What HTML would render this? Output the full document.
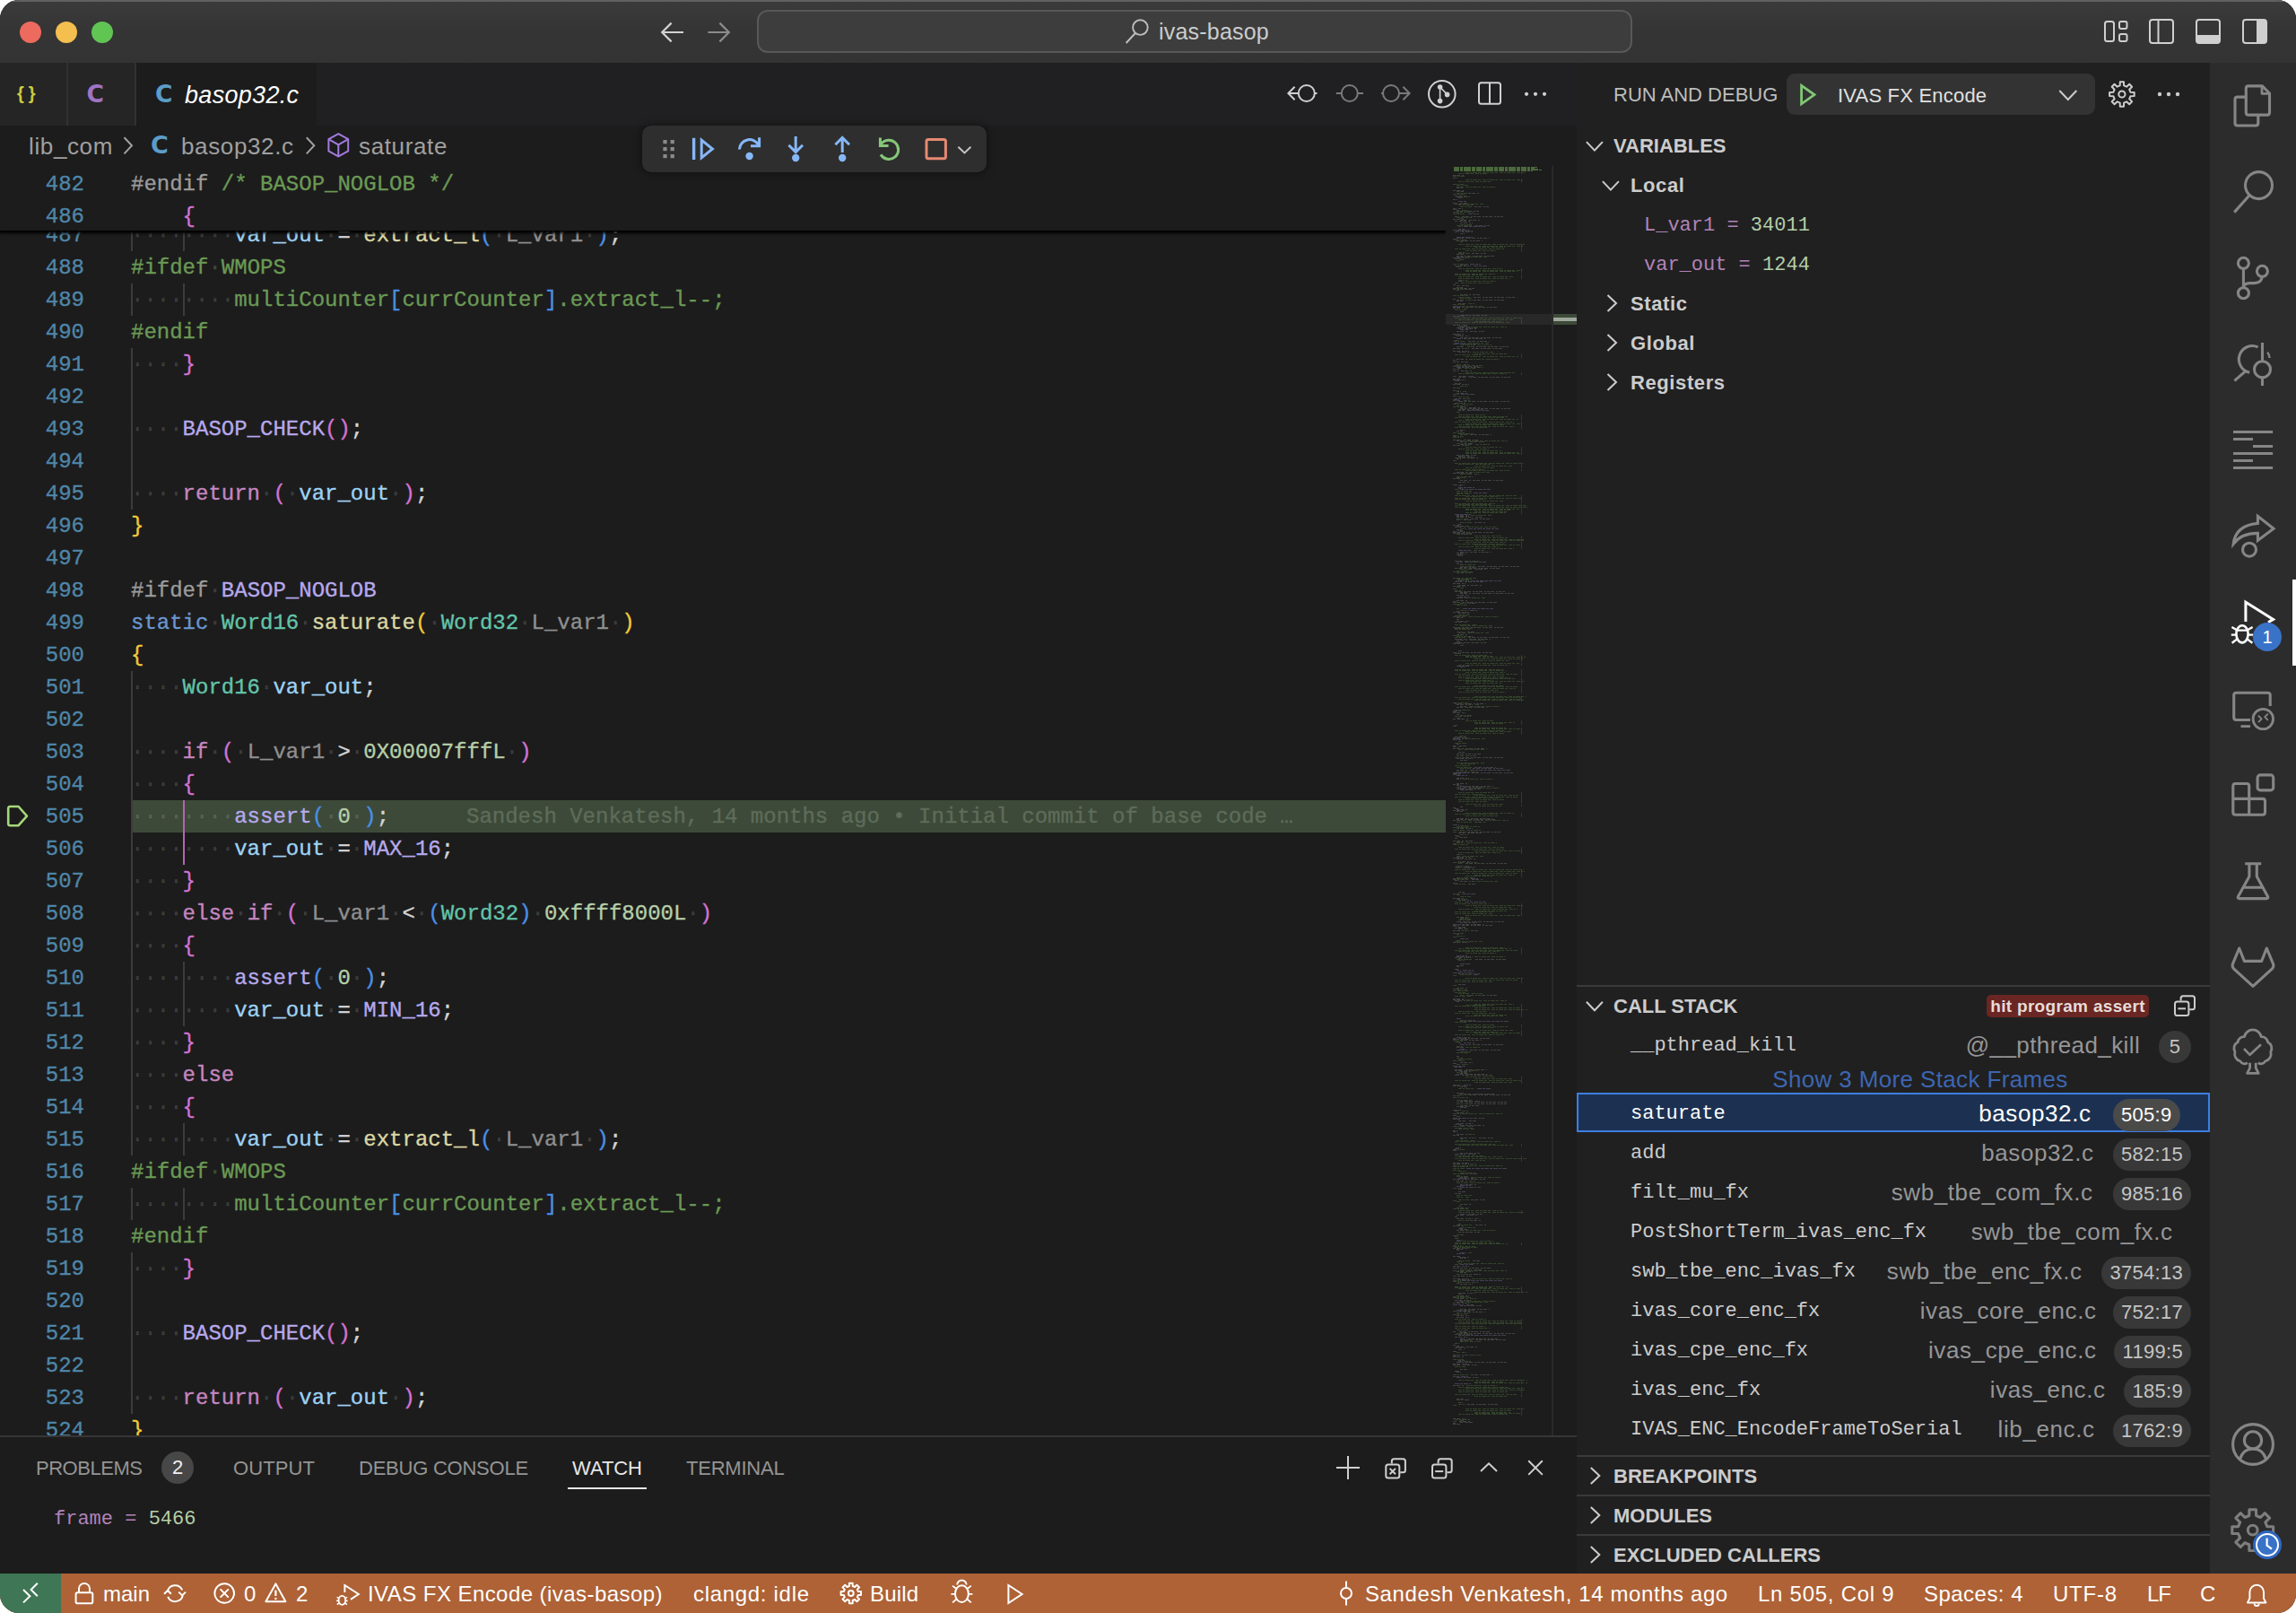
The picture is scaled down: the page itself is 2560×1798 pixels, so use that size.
<!DOCTYPE html>
<html lang="en"><head><meta charset="utf-8"><title>basop32.c — ivas-basop</title>
<style>
*{box-sizing:border-box;margin:0;padding:0}
html,body{width:2560px;height:1798px;overflow:hidden;background:#fff}
body{font-family:"Liberation Sans","DejaVu Sans",sans-serif;color:#ccc;position:relative}
svg{display:block;overflow:visible}
.abs{position:absolute}
#win{position:absolute;left:0;top:0;width:2560px;height:1798px;border-radius:21px;overflow:hidden;background:#1c1c1c}
/* title bar */
#title{position:absolute;left:0;top:0;width:2560px;height:70px;background:linear-gradient(#3b3b3b,#353535 45%,#333)}
#title:before{content:"";position:absolute;left:0;top:0;width:2560px;height:2px;background:#606060}
.tl{position:absolute;top:24px;width:24px;height:24px;border-radius:50%}
#search{position:absolute;left:844px;top:11px;width:976px;height:48px;border:2px solid #585858;border-radius:12px;background:#3d3d3d}
#search span{position:absolute;left:446px;top:6px;font-size:25px;line-height:32px;color:#ccc;letter-spacing:.2px}
/* tabs */
#tabs{position:absolute;left:0;top:70px;width:1758px;height:70px;background:#202022}
.tab{position:absolute;top:0;height:70px;background:#252525;border-right:2px solid #323232}
#tab3{background:#1c1c1c;border-right:none}
#tab3 span{position:absolute;left:54px;top:19px;font-size:27px;line-height:34px;font-style:italic;color:#fff;letter-spacing:.3px}
.cicon{position:absolute;font-weight:bold;font-size:30px;line-height:34px;font-family:"DejaVu Sans","Liberation Sans",sans-serif}
/* breadcrumbs */
#crumbs{position:absolute;left:0;top:140px;width:1758px;height:45px;background:#1c1c1c;font-size:26px;line-height:47px;color:#a0a0a0;letter-spacing:.63px}
#crumbs span{position:absolute;top:0;white-space:nowrap}
/* editor */
#editor{position:absolute;left:0;top:185px;width:1758px;height:1415px;background:#1c1c1c;overflow:hidden}
.ln{position:absolute;left:0;width:1612px;height:36px;font-family:"Liberation Mono","DejaVu Sans Mono",monospace;font-size:24px;line-height:36px;white-space:pre;-webkit-text-stroke:.35px currentColor}
.ln .no{position:absolute;left:0;top:1px;width:94px;text-align:right;color:#4f86a9}
.ln .cd{position:absolute;left:146px;top:1px}
.ln .g{position:absolute;top:0;width:2px;height:36px;background:#3c3c3c}
.ln .ga{background:#b565b0}
.curbg{position:absolute;left:146px;top:0;width:1466px;height:36px;background:#3d4a39}
.blame{position:absolute;left:520px;top:1px;color:#5e6c59}
.k{color:#c586c0}.s{color:#6a96d0}.t{color:#62c4aa}.f{color:#dad7a4}.v{color:#9dd2f4}
.p{color:#8f8f8f}.n{color:#b5cea8}.m{color:#b6a8ec}.c{color:#6a9955}.o{color:#d4d4d4}.d{color:#9b9b9b}
.b1{color:#f0ca3a}.b2{color:#d272d2}.b3{color:#4a8fe6}
.w{color:rgba(255,255,255,.135)}.wc{color:#3a4d33}
#sticky{position:absolute;left:0;top:0;width:1612px;height:72px;background:#1c1c1c;box-shadow:0 2px 3px 1px #000}
#sticky .ln{margin-top:2px}
#mmwrap{position:absolute;left:1612px;top:0;width:146px;height:1415px;background:#1c1c1c}
#mm{position:absolute;left:0;top:0}
#mmslider{position:absolute;left:0;top:165px;width:146px;height:12px;background:rgba(121,121,121,.13)}
#ovr{position:absolute;left:118px;top:0;width:1.5px;height:1415px;background:#2a2a2a}
/* panel */
#panel{position:absolute;left:0;top:1600px;width:1758px;height:154px;background:#1c1c1c;border-top:2px solid #363636}
.ptab{position:absolute;top:17.5px;font-size:22px;line-height:34px;color:#949494;letter-spacing:.4px;white-space:nowrap}
#watch{position:absolute;left:60px;top:74px;font-family:"Liberation Mono",monospace;font-size:22px;line-height:36px;white-space:pre}
/* sidebar */
#side{position:absolute;left:1758px;top:70px;width:706px;height:1684px;background:#202021}
.sh{position:absolute;left:0;width:706px;height:44px;font-weight:bold;font-size:22px;line-height:46px;color:#ccc;letter-spacing:0}
.sh span{position:absolute;left:41px;top:0;white-space:nowrap}
.sh.bt{border-top:2px solid #3a3a3c;line-height:43px}
.row{position:absolute;left:0;width:706px;height:44px;line-height:44px;white-space:nowrap}
.row .nm{position:absolute;left:60px;top:2px;font-family:"Liberation Mono",monospace;font-size:22px;color:#ccc}
.row .fl{position:absolute;top:1px;font-size:26px;color:#969696;letter-spacing:.6px;margin-right:-.6px}
.row .bd{position:absolute;top:7px;right:21px;height:36px;line-height:36px;border-radius:18px;background:#383838;color:#c4c4c4;font-size:22px;padding:0 9px 0 9.3px;letter-spacing:.3px}
.scope{position:absolute;left:60px;font-weight:bold;font-size:22px;line-height:46px;letter-spacing:.6px;color:#ccc}
.var{position:absolute;left:75px;font-family:"Liberation Mono",monospace;font-size:22px;line-height:47px;white-space:pre}
/* activity bar */
#act{position:absolute;left:2464px;top:70px;width:96px;height:1684px;background:#2c2c2c}
/* status */
#status{position:absolute;left:0;top:1754px;width:2560px;height:44px;background:#ae6236;color:#fff;font-size:24px;line-height:46px;white-space:nowrap}
#status span{position:absolute;top:0}
#remote{position:absolute;left:0;top:0;width:68px;height:44px;background:#3f7655}

</style></head>
<body>
<div id="win">
<!-- ===== TITLE BAR ===== -->
<div id="title">
  <div class="tl" style="left:22px;background:#ec6a5e"></div>
  <div class="tl" style="left:62px;background:#f4bf4f"></div>
  <div class="tl" style="left:102px;background:#61c554"></div>
  <svg class="abs" style="left:0;top:0" width="2560" height="70" viewBox="0 0 2560 70" fill="none" stroke-linecap="butt" stroke-linejoin="miter">
  <!-- back / forward -->
  <path d="M762 36H739M748.6 25.6L738.2 36L748.6 46.4" stroke="#d2d2d2" stroke-width="2.2"/>
  <path d="M789.5 36H812.5M802.4 25.6L812.8 36L802.4 46.4" stroke="#8c8c8c" stroke-width="2.2"/>
  <!-- layout controls -->
  <g stroke="#cfcfcf" stroke-width="2">
    <rect x="2347" y="24" width="10" height="22" rx="2.5"/>
    <rect x="2363" y="24" width="8.5" height="8" rx="2"/>
    <rect x="2363" y="38" width="8.5" height="8" rx="2"/>
    <rect x="2397" y="22" width="26" height="26" rx="3"/>
    <path d="M2406.5 22V48"/>
    <rect x="2449" y="22" width="26" height="26" rx="3"/>
    <rect x="2501" y="22" width="26" height="26" rx="3"/>
  </g>
  <path d="M2449 39H2475V45Q2475 48 2472 48H2452Q2449 48 2449 45Z" fill="#cfcfcf"/>
  <path d="M2516 22H2524Q2527 22 2527 25V45Q2527 48 2524 48H2516Z" fill="#cfcfcf"/>
</svg>

  <div id="search"><svg class="abs" style="left:-2px;top:-2px" width="976" height="48" viewBox="844 11 976 48" fill="none"><circle cx="1271.4" cy="30.6" r="8.3" stroke="#bdbdbd" stroke-width="1.9"/><path d="M1265.8 37L1255.6 48" stroke="#bdbdbd" stroke-width="2"/></svg><span>ivas-basop</span></div>
</div>
<!-- ===== TABS ===== -->
<div id="tabs">
  <div class="tab" id="tab1" style="left:0;width:76px"><b class="cicon" style="left:19px;top:17px;color:#cbcb41;font-size:20px;letter-spacing:5px;font-family:'Liberation Sans',sans-serif">{}</b></div>
  <div class="tab" id="tab2" style="left:76px;width:76px"><b class="cicon" style="left:20.5px;top:18px;color:#a074c4;font-size:26.5px">C</b></div>
  <div class="tab" id="tab3" style="left:152px;width:201px"><b class="cicon" style="left:21px;top:18px;color:#5b9dc9;font-size:26.5px">C</b><span>basop32.c</span></div>
  <svg class="abs" style="left:0;top:0" width="1758" height="70" viewBox="0 70 1758 70" fill="none">
  <!-- previous revision: arrow-left + circle -->
  <g stroke="#d0d0d0" stroke-width="2">
    <circle cx="1456.8" cy="104" r="9"/>
    <path d="M1447.8 104H1437.5M1443.6 96.8L1436.4 104L1443.6 111.2M1465.8 104H1468.5"/>
  </g>
  <g stroke="#7a7a7a" stroke-width="2">
    <circle cx="1504.8" cy="104" r="9"/>
    <path d="M1489.8 104H1495.8M1513.8 104H1520"/>
    <circle cx="1551" cy="104" r="9"/>
    <path d="M1540 104H1542M1560 104H1571M1564.4 96.8L1571.6 104L1564.4 111.2"/>
  </g>
  <!-- git graph in circle -->
  <circle cx="1607.8" cy="104.8" r="14.8" stroke="#d0d0d0" stroke-width="2"/>
  <g fill="#d0d0d0"><circle cx="1605.6" cy="97" r="2.8"/><circle cx="1605.6" cy="112.6" r="2.8"/><circle cx="1613.6" cy="105.4" r="2.8"/></g>
  <path d="M1605.6 97V112.6M1605.6 97L1613.6 105.4" stroke="#d0d0d0" stroke-width="1.6"/>
  <!-- split editor -->
  <rect x="1649" y="92.2" width="24" height="23.6" rx="2.5" stroke="#d0d0d0" stroke-width="2"/>
  <path d="M1661 92.2V115.8" stroke="#d0d0d0" stroke-width="2"/>
  <g fill="#d0d0d0"><circle cx="1702" cy="104.8" r="2.1"/><circle cx="1712" cy="104.8" r="2.1"/><circle cx="1722" cy="104.8" r="2.1"/></g>
</svg>

</div>
<!-- ===== BREADCRUMBS ===== -->
<div id="crumbs">
  <span id="cr1" style="left:32px">lib_com</span>
  <b class="cicon" style="left:168px;top:5px;color:#5b9dc9;font-size:27px;letter-spacing:0">C</b>
  <span id="cr2" style="left:202px">basop32.c</span>
  <span id="cr3" style="left:400px">saturate</span>
  <svg class="abs" style="left:0;top:0" width="600" height="45" viewBox="0 140 600 45" fill="none">
  <path d="M138.5 153.2L147 162.3L138.5 171.4" stroke="#a0a0a0" stroke-width="2"/>
  <path d="M341.8 153.2L350.3 162.3L341.8 171.4" stroke="#a0a0a0" stroke-width="2"/>
  <g stroke="#a37be0" stroke-width="2" stroke-linejoin="round">
    <path d="M377.3 149.2L388.2 155.2V168.4L377.3 174.4L366.4 168.4V155.2Z"/>
    <path d="M366.4 155.2L377.3 161.4L388.2 155.2M377.3 161.4V174.4"/>
  </g>
</svg>

</div>
<!-- ===== EDITOR ===== -->
<div id="editor">
<div class="ln" style="top:59px"><i class="g" style="left:146.0px"></i><i class="g" style="left:203.6px"></i><span class="no">487</span><span class="cd"><span class="w">········</span><span class="v">var_out</span><span class="w">·</span><span class="o">=</span><span class="w">·</span><span class="f">extract_l</span><span class="b3">(</span><span class="w">·</span><span class="p">L_var1</span><span class="w">·</span><span class="b3">)</span><span class="o">;</span></span></div>
<div class="ln" style="top:95px"><span class="no">488</span><span class="cd"><span class="c">#ifdef</span><span class="wc">·</span><span class="c">WMOPS</span></span></div>
<div class="ln" style="top:131px"><i class="g" style="left:146.0px"></i><i class="g" style="left:203.6px"></i><span class="no">489</span><span class="cd"><span class="w">········</span><span class="c">multiCounter</span><span class="b3">[</span><span class="c">currCounter</span><span class="b3">]</span><span class="c">.extract_l--;</span></span></div>
<div class="ln" style="top:167px"><span class="no">490</span><span class="cd"><span class="c">#endif</span></span></div>
<div class="ln" style="top:203px"><i class="g" style="left:146.0px"></i><span class="no">491</span><span class="cd"><span class="w">····</span><span class="b2">}</span></span></div>
<div class="ln" style="top:239px"><i class="g" style="left:146.0px"></i><span class="no">492</span><span class="cd"></span></div>
<div class="ln" style="top:275px"><i class="g" style="left:146.0px"></i><span class="no">493</span><span class="cd"><span class="w">····</span><span class="m">BASOP_CHECK</span><span class="b2">()</span><span class="o">;</span></span></div>
<div class="ln" style="top:311px"><i class="g" style="left:146.0px"></i><span class="no">494</span><span class="cd"></span></div>
<div class="ln" style="top:347px"><i class="g" style="left:146.0px"></i><span class="no">495</span><span class="cd"><span class="w">····</span><span class="k">return</span><span class="w">·</span><span class="b2">(</span><span class="w">·</span><span class="v">var_out</span><span class="w">·</span><span class="b2">)</span><span class="o">;</span></span></div>
<div class="ln" style="top:383px"><span class="no">496</span><span class="cd"><span class="b1">}</span></span></div>
<div class="ln" style="top:419px"><span class="no">497</span><span class="cd"></span></div>
<div class="ln" style="top:455px"><span class="no">498</span><span class="cd"><span class="d">#ifdef</span><span class="w">·</span><span class="m">BASOP_NOGLOB</span></span></div>
<div class="ln" style="top:491px"><span class="no">499</span><span class="cd"><span class="s">static</span><span class="w">·</span><span class="t">Word16</span><span class="w">·</span><span class="f">saturate</span><span class="b1">(</span><span class="w">·</span><span class="t">Word32</span><span class="w">·</span><span class="p">L_var1</span><span class="w">·</span><span class="b1">)</span></span></div>
<div class="ln" style="top:527px"><span class="no">500</span><span class="cd"><span class="b1">{</span></span></div>
<div class="ln" style="top:563px"><i class="g" style="left:146.0px"></i><span class="no">501</span><span class="cd"><span class="w">····</span><span class="t">Word16</span><span class="w">·</span><span class="v">var_out</span><span class="o">;</span></span></div>
<div class="ln" style="top:599px"><i class="g" style="left:146.0px"></i><span class="no">502</span><span class="cd"></span></div>
<div class="ln" style="top:635px"><i class="g" style="left:146.0px"></i><span class="no">503</span><span class="cd"><span class="w">····</span><span class="k">if</span><span class="w">·</span><span class="b2">(</span><span class="w">·</span><span class="p">L_var1</span><span class="w">·</span><span class="o">&gt;</span><span class="w">·</span><span class="n">0X00007fffL</span><span class="w">·</span><span class="b2">)</span></span></div>
<div class="ln" style="top:671px"><i class="g" style="left:146.0px"></i><span class="no">504</span><span class="cd"><span class="w">····</span><span class="b2">{</span></span></div>
<div class="ln cur" style="top:707px"><div class="curbg"></div><i class="g" style="left:146.0px"></i><i class="g ga" style="left:203.6px"></i><span class="no">505</span><span class="cd"><span class="w">········</span><span class="m">assert</span><span class="b3">(</span><span class="w">·</span><span class="n">0</span><span class="w">·</span><span class="b3">)</span><span class="o">;</span></span><span class="blame">Sandesh Venkatesh, 14 months ago • Initial commit of base code …</span></div>
<div class="ln" style="top:743px"><i class="g" style="left:146.0px"></i><i class="g ga" style="left:203.6px"></i><span class="no">506</span><span class="cd"><span class="w">········</span><span class="v">var_out</span><span class="w">·</span><span class="o">=</span><span class="w">·</span><span class="m">MAX_16</span><span class="o">;</span></span></div>
<div class="ln" style="top:779px"><i class="g" style="left:146.0px"></i><span class="no">507</span><span class="cd"><span class="w">····</span><span class="b2">}</span></span></div>
<div class="ln" style="top:815px"><i class="g" style="left:146.0px"></i><span class="no">508</span><span class="cd"><span class="w">····</span><span class="k">else</span><span class="w">·</span><span class="k">if</span><span class="w">·</span><span class="b2">(</span><span class="w">·</span><span class="p">L_var1</span><span class="w">·</span><span class="o">&lt;</span><span class="w">·</span><span class="b3">(</span><span class="t">Word32</span><span class="b3">)</span><span class="w">·</span><span class="n">0xffff8000L</span><span class="w">·</span><span class="b2">)</span></span></div>
<div class="ln" style="top:851px"><i class="g" style="left:146.0px"></i><span class="no">509</span><span class="cd"><span class="w">····</span><span class="b2">{</span></span></div>
<div class="ln" style="top:887px"><i class="g" style="left:146.0px"></i><i class="g" style="left:203.6px"></i><span class="no">510</span><span class="cd"><span class="w">········</span><span class="m">assert</span><span class="b3">(</span><span class="w">·</span><span class="n">0</span><span class="w">·</span><span class="b3">)</span><span class="o">;</span></span></div>
<div class="ln" style="top:923px"><i class="g" style="left:146.0px"></i><i class="g" style="left:203.6px"></i><span class="no">511</span><span class="cd"><span class="w">········</span><span class="v">var_out</span><span class="w">·</span><span class="o">=</span><span class="w">·</span><span class="m">MIN_16</span><span class="o">;</span></span></div>
<div class="ln" style="top:959px"><i class="g" style="left:146.0px"></i><span class="no">512</span><span class="cd"><span class="w">····</span><span class="b2">}</span></span></div>
<div class="ln" style="top:995px"><i class="g" style="left:146.0px"></i><span class="no">513</span><span class="cd"><span class="w">····</span><span class="k">else</span></span></div>
<div class="ln" style="top:1031px"><i class="g" style="left:146.0px"></i><span class="no">514</span><span class="cd"><span class="w">····</span><span class="b2">{</span></span></div>
<div class="ln" style="top:1067px"><i class="g" style="left:146.0px"></i><i class="g" style="left:203.6px"></i><span class="no">515</span><span class="cd"><span class="w">········</span><span class="v">var_out</span><span class="w">·</span><span class="o">=</span><span class="w">·</span><span class="f">extract_l</span><span class="b3">(</span><span class="w">·</span><span class="p">L_var1</span><span class="w">·</span><span class="b3">)</span><span class="o">;</span></span></div>
<div class="ln" style="top:1103px"><span class="no">516</span><span class="cd"><span class="c">#ifdef</span><span class="wc">·</span><span class="c">WMOPS</span></span></div>
<div class="ln" style="top:1139px"><i class="g" style="left:146.0px"></i><i class="g" style="left:203.6px"></i><span class="no">517</span><span class="cd"><span class="w">········</span><span class="c">multiCounter</span><span class="b3">[</span><span class="c">currCounter</span><span class="b3">]</span><span class="c">.extract_l--;</span></span></div>
<div class="ln" style="top:1175px"><span class="no">518</span><span class="cd"><span class="c">#endif</span></span></div>
<div class="ln" style="top:1211px"><i class="g" style="left:146.0px"></i><span class="no">519</span><span class="cd"><span class="w">····</span><span class="b2">}</span></span></div>
<div class="ln" style="top:1247px"><i class="g" style="left:146.0px"></i><span class="no">520</span><span class="cd"></span></div>
<div class="ln" style="top:1283px"><i class="g" style="left:146.0px"></i><span class="no">521</span><span class="cd"><span class="w">····</span><span class="m">BASOP_CHECK</span><span class="b2">()</span><span class="o">;</span></span></div>
<div class="ln" style="top:1319px"><i class="g" style="left:146.0px"></i><span class="no">522</span><span class="cd"></span></div>
<div class="ln" style="top:1355px"><i class="g" style="left:146.0px"></i><span class="no">523</span><span class="cd"><span class="w">····</span><span class="k">return</span><span class="w">·</span><span class="b2">(</span><span class="w">·</span><span class="v">var_out</span><span class="w">·</span><span class="b2">)</span><span class="o">;</span></span></div>
<div class="ln" style="top:1391px"><span class="no">524</span><span class="cd"><span class="b1">}</span></span></div>
  <div id="sticky">
    <div class="ln" style="top:0"><span class="no">482</span><span class="cd"><span class="d">#endif</span> <span class="c">/* BASOP_NOGLOB */</span></span></div>
    <div class="ln" style="top:36px"><span class="no">486</span><span class="cd">    <span class="b2">{</span></span></div>
  </div>
  <div id="mmwrap">
    <svg id="mm" width="116" height="1406" viewBox="0 0 116 1406" shape-rendering="crispEdges" fill="none"><path d="M22 7.5h67M14 8.5h32M8 11.5h14M22 15.5h65M14 17.5h36M8 20.5h12M12 21.5h14M22 23.5h34M12 24.5h7M12 30.5h12M8 31.5h14M20 34.5h8M19 42.5h24M14 43.5h18M16 45.5h14M8 48.5h4M18 49.5h8M15 51.5h16M8 53.5h14M12 57.5h18M16 58.5h5M16 65.5h14M12 66.5h18M10 82.5h14M14 87.5h74M22 89.5h65M32 90.5h34M10 92.5h55M22 94.5h34M14 96.5h7M14 97.5h14M23 101.5h24M16 104.5h5M12 105.5h5M8 109.5h18M14 114.5h49M22 116.5h63M22 117.5h58M10 120.5h46M10 121.5h31M14 123.5h62M14 125.5h58M14 127.5h9M22 128.5h34M10 130.5h4M17 130.5h34M12 133.5h5M8 137.5h12M8 144.5h18M14 146.5h14M16 147.5h14M25 153.5h8M8 154.5h14M18 156.5h24M20 158.5h5M10 160.5h14M10 169.5h75M14 171.5h61M32 173.5h30M10 174.5h61M23 179.5h46M31 180.5h5M8 191.5h5M8 195.5h14M25 197.5h24M16 199.5h18M35 199.5h16M30 207.5h24M32 209.5h38M10 210.5h30M22 212.5h59M26 215.5h34M10 222.5h18M29 222.5h12M21 225.5h12M8 228.5h7M22 230.5h56M14 231.5h54M8 234.5h4M16 245.5h9M8 250.5h7M19 251.5h5M8 254.5h7M14 257.5h12M20 261.5h8M10 264.5h4M15 264.5h8M8 265.5h7M18 265.5h12M8 268.5h12M16 270.5h9M12 274.5h4M14 277.5h30M14 279.5h57M10 280.5h55M22 282.5h59M14 283.5h30M10 285.5h66M22 287.5h62M14 288.5h52M14 290.5h63M10 291.5h36M8 297.5h14M14 298.5h18M8 301.5h12M8 302.5h9M24 306.5h46M12 309.5h12M16 310.5h14M33 310.5h16M22 313.5h40M14 315.5h34M22 317.5h40M22 319.5h59M22 320.5h62M23 323.5h5M10 325.5h12M8 328.5h5M10 331.5h77M14 332.5h39M32 334.5h43M22 336.5h33M10 338.5h33M22 339.5h49M26 341.5h24M16 343.5h14M12 346.5h12M18 347.5h5M10 360.5h5M12 362.5h18M12 364.5h18M12 365.5h7M22 365.5h5M10 367.5h69M22 368.5h39M10 370.5h74M10 371.5h34M22 373.5h42M10 376.5h45M14 377.5h37M10 378.5h81M10 380.5h82M22 382.5h60M22 383.5h50M32 385.5h38M22 386.5h46M28 389.5h24M12 393.5h14M16 397.5h14M24 402.5h34M16 404.5h7M8 409.5h4M12 410.5h18M32 412.5h30M14 414.5h57M32 416.5h57M14 417.5h73M22 419.5h46M10 421.5h56M32 422.5h52M14 424.5h46M32 426.5h44M31 428.5h12M14 432.5h9M21 440.5h16M16 444.5h18M16 446.5h18M16 449.5h14M12 451.5h12M8 452.5h7M18 452.5h12M22 459.5h12M12 460.5h18M14 461.5h12M12 469.5h4M16 470.5h4M8 471.5h5M10 473.5h9M21 481.5h24M8 485.5h4M16 487.5h7M8 488.5h9M12 489.5h12M16 495.5h9M14 500.5h14M10 501.5h14M25 502.5h34M10 511.5h18M30 511.5h5M16 512.5h12M29 512.5h24M18 515.5h12M10 516.5h18M12 519.5h9M25 520.5h24M8 523.5h9M12 524.5h12M10 525.5h12M27 528.5h16M16 534.5h4M8 542.5h9M10 545.5h36M22 546.5h30M22 547.5h67M32 549.5h54M10 551.5h60M22 554.5h60M14 556.5h58M10 561.5h54M10 562.5h58M22 564.5h44M10 566.5h70M14 568.5h51M14 570.5h58M22 571.5h56M14 573.5h39M22 574.5h66M22 576.5h40M32 579.5h33M10 580.5h70M14 582.5h65M22 584.5h37M14 586.5h53M32 591.5h58M10 592.5h76M14 594.5h70M32 595.5h55M8 598.5h18M33 600.5h5M26 602.5h34M10 606.5h18M8 608.5h5M16 612.5h14M12 615.5h4M22 618.5h31M32 620.5h46M32 621.5h33M32 626.5h35M32 627.5h52M10 629.5h55M22 630.5h51M14 632.5h51M16 635.5h7M21 638.5h24M14 641.5h4M10 643.5h14M8 647.5h9M14 650.5h4M20 650.5h24M22 657.5h12M10 659.5h7M12 665.5h7M20 665.5h24M16 666.5h18M10 668.5h18M12 670.5h18M16 671.5h12M20 675.5h16M8 678.5h7M19 683.5h34M26 693.5h34M14 698.5h40M10 700.5h31M32 701.5h49M10 703.5h71M22 704.5h39M14 706.5h52M14 708.5h32M22 711.5h42M32 713.5h30M22 721.5h54M10 722.5h48M22 724.5h37M25 729.5h46M12 731.5h18M16 735.5h9M12 736.5h9M22 736.5h16M8 737.5h18M8 740.5h14M23 740.5h16M8 742.5h4M16 745.5h9M12 747.5h4M12 753.5h7M12 754.5h9M23 754.5h34M8 755.5h4M8 756.5h18M14 759.5h52M10 761.5h56M32 763.5h53M14 765.5h47M12 767.5h7M12 769.5h4M19 769.5h24M8 776.5h12M23 776.5h12M14 777.5h5M12 780.5h9M22 780.5h5M10 784.5h77M22 786.5h66M10 788.5h71M32 790.5h45M22 791.5h30M12 793.5h14M8 795.5h18M35 797.5h24M10 800.5h12M12 812.5h4M16 814.5h12M12 817.5h12M10 820.5h9M10 822.5h39M22 824.5h65M32 826.5h41M14 828.5h66M32 830.5h38M10 831.5h44M10 833.5h42M22 835.5h61M16 838.5h9M16 839.5h12M14 840.5h14M8 846.5h7M21 850.5h5M8 855.5h12M12 858.5h9M8 859.5h5M12 863.5h5M10 864.5h7M18 864.5h24M22 871.5h44M14 872.5h59M10 874.5h70M14 875.5h47M22 877.5h34M32 881.5h34M12 884.5h18M14 885.5h7M16 901.5h12M8 902.5h4M22 905.5h64M10 907.5h70M10 909.5h43M8 913.5h4M8 917.5h7M12 918.5h12M13 919.5h12M10 921.5h12M14 922.5h12M29 922.5h12M16 924.5h4M10 925.5h12M24 925.5h5M23 929.5h8M23 930.5h46M32 934.5h44M22 935.5h31M10 936.5h34M32 938.5h51M32 940.5h59M14 942.5h31M10 944.5h46M32 946.5h37M22 947.5h43M16 952.5h18M10 954.5h14M22 957.5h32M14 959.5h57M22 960.5h31M14 963.5h62M22 965.5h36M32 966.5h51M10 968.5h56M20 971.5h8M8 972.5h5M8 974.5h5M12 975.5h7M10 976.5h5M12 981.5h7M22 982.5h16M16 987.5h12M12 988.5h14M12 994.5h7M16 995.5h14M8 997.5h14M12 1001.5h5M18 1001.5h8M20 1008.5h16M12 1010.5h12M22 1015.5h32M32 1017.5h42M10 1019.5h75M32 1021.5h43M8 1024.5h9M14 1028.5h18M14 1034.5h5M16 1035.5h9M8 1038.5h18M12 1041.5h18M12 1045.5h9M10 1053.5h5M18 1053.5h8M8 1056.5h9M18 1056.5h46M12 1059.5h5M8 1070.5h14M24 1070.5h8M26 1072.5h5M14 1073.5h12M28 1073.5h5M25 1079.5h8M16 1084.5h5M12 1086.5h14M10 1087.5h5M16 1087.5h46M10 1090.5h45M14 1091.5h61M8 1096.5h14M10 1103.5h32M14 1104.5h49M10 1106.5h81M14 1108.5h30M27 1112.5h8M8 1114.5h9M18 1114.5h46M8 1115.5h18M8 1117.5h14M8 1119.5h7M14 1120.5h9M16 1122.5h18M8 1123.5h18M12 1125.5h5M12 1126.5h14M28 1127.5h34M26 1131.5h8M12 1133.5h14M27 1133.5h34M35 1138.5h5M8 1139.5h9M12 1147.5h18M12 1149.5h7M22 1149.5h5M14 1152.5h12M8 1153.5h5M12 1154.5h5M14 1159.5h4M8 1162.5h18M14 1164.5h49M14 1166.5h73M14 1175.5h12M12 1180.5h18M16 1183.5h18M22 1186.5h34M8 1192.5h5M10 1193.5h4M10 1195.5h5M12 1197.5h7M19 1198.5h34M10 1200.5h50M10 1201.5h59M8 1203.5h9M8 1204.5h12M21 1204.5h12M10 1205.5h12M23 1205.5h12M25 1211.5h5M14 1220.5h14M12 1221.5h7M14 1223.5h5M20 1223.5h46M10 1224.5h4M16 1230.5h14M8 1231.5h14M23 1231.5h46M12 1235.5h18M8 1237.5h4M29 1240.5h46M8 1242.5h9M8 1243.5h9M14 1244.5h14M29 1244.5h8M10 1249.5h60M10 1250.5h41M14 1251.5h69M22 1253.5h36M32 1255.5h59M14 1257.5h4M8 1260.5h18M8 1261.5h14M24 1261.5h5M27 1262.5h8M22 1265.5h34M24 1266.5h24M20 1275.5h12M8 1276.5h4M12 1279.5h14M8 1280.5h7M10 1285.5h35M14 1287.5h71M14 1289.5h71M10 1290.5h74M10 1293.5h34M10 1295.5h39M12 1297.5h14M12 1301.5h18M23 1302.5h8M22 1309.5h8M16 1310.5h9M27 1310.5h12M14 1319.5h5M12 1322.5h5M27 1325.5h12M8 1326.5h4M8 1330.5h12M14 1332.5h4M21 1332.5h8M10 1338.5h12M8 1347.5h18M14 1353.5h77M32 1355.5h33M32 1356.5h59M23 1359.5h34M14 1361.5h57M22 1362.5h66M14 1364.5h74M14 1366.5h56M10 1369.5h69M32 1371.5h36M12 1375.5h7M14 1380.5h9M8 1381.5h4M22 1385.5h66M22 1387.5h52M32 1389.5h40M32 1390.5h52M14 1391.5h55M10 1397.5h18M16 1398.5h4M8 1399.5h4" stroke="#5f8a48" stroke-width="1" opacity="0.36" stroke-dasharray="4 1 2 1 5 1 3 2"/><path d="M8 10.5h12M8 13.5h5M12 23.5h9M8 27.5h12M12 28.5h9M25 30.5h12M10 33.5h14M12 34.5h7M14 35.5h5M8 37.5h5M8 41.5h5M16 41.5h8M10 42.5h7M32 45.5h16M8 47.5h5M14 47.5h5M12 49.5h4M12 50.5h7M21 50.5h16M8 51.5h5M12 52.5h4M10 56.5h5M18 56.5h46M8 59.5h12M16 60.5h7M26 60.5h12M10 61.5h4M15 61.5h12M16 63.5h14M33 66.5h16M14 67.5h5M14 70.5h7M12 72.5h18M10 73.5h5M18 73.5h12M16 75.5h5M12 80.5h12M25 80.5h24M8 81.5h5M12 83.5h4M17 83.5h24M16 84.5h4M29 97.5h16M12 98.5h9M12 100.5h7M20 100.5h34M12 101.5h9M8 102.5h18M10 103.5h7M16 110.5h7M10 111.5h18M12 112.5h5M8 132.5h4M18 133.5h8M12 135.5h7M8 136.5h7M16 136.5h16M21 137.5h8M12 138.5h4M16 143.5h12M30 143.5h8M31 146.5h46M8 148.5h4M12 149.5h18M31 149.5h34M12 150.5h7M14 153.5h9M8 157.5h12M23 157.5h34M8 158.5h9M30 166.5h16M8 167.5h12M8 177.5h9M19 177.5h5M16 178.5h9M14 179.5h7M12 180.5h18M14 181.5h5M22 181.5h12M12 184.5h12M27 184.5h16M8 187.5h12M10 188.5h7M12 189.5h14M16 191.5h46M20 192.5h24M10 194.5h5M25 195.5h24M18 198.5h16M12 201.5h9M24 201.5h46M8 203.5h18M29 203.5h34M8 206.5h18M14 207.5h14M12 215.5h12M8 216.5h5M8 218.5h7M17 218.5h8M12 221.5h5M20 221.5h5M8 223.5h12M21 223.5h16M18 224.5h24M14 225.5h4M8 226.5h7M17 228.5h12M15 234.5h16M14 235.5h9M26 235.5h46M8 237.5h9M8 238.5h14M10 242.5h7M8 243.5h18M8 247.5h9M12 251.5h5M12 253.5h12M8 256.5h5M10 259.5h7M19 259.5h8M8 261.5h9M25 262.5h46M12 267.5h7M20 267.5h5M16 269.5h7M26 269.5h12M26 270.5h46M14 271.5h12M29 271.5h12M14 272.5h7M16 294.5h5M12 295.5h7M16 299.5h9M27 299.5h24M8 300.5h5M8 305.5h9M20 305.5h16M12 306.5h9M16 307.5h9M27 307.5h16M8 311.5h18M12 322.5h5M18 322.5h16M14 324.5h18M24 325.5h12M12 326.5h5M12 341.5h12M13 342.5h16M32 343.5h5M25 346.5h5M12 347.5h5M8 348.5h9M16 350.5h12M30 350.5h34M14 352.5h12M16 355.5h5M14 356.5h4M14 359.5h5M12 389.5h14M12 390.5h14M12 391.5h18M33 391.5h8M28 393.5h24M12 394.5h5M20 394.5h8M32 397.5h12M14 399.5h4M8 400.5h7M12 401.5h14M10 402.5h12M12 405.5h5M8 407.5h5M16 407.5h5M8 408.5h9M19 408.5h34M13 409.5h16M27 430.5h24M12 431.5h7M12 433.5h7M14 434.5h5M10 440.5h9M12 441.5h7M12 443.5h5M36 446.5h46M16 447.5h18M10 448.5h14M26 448.5h34M33 449.5h12M12 453.5h18M8 459.5h12M12 462.5h14M10 463.5h9M21 463.5h24M8 465.5h14M14 467.5h12M28 467.5h12M8 468.5h14M10 474.5h9M20 474.5h46M16 475.5h9M16 476.5h12M30 476.5h46M12 478.5h14M12 481.5h7M12 484.5h12M8 486.5h14M23 486.5h34M25 487.5h8M12 493.5h4M12 496.5h4M8 497.5h18M14 498.5h12M8 502.5h14M12 503.5h7M12 505.5h4M12 507.5h14M10 508.5h14M8 514.5h9M18 514.5h46M10 515.5h7M24 519.5h8M14 520.5h9M12 522.5h12M25 524.5h5M25 525.5h46M10 527.5h14M26 527.5h24M12 528.5h12M10 531.5h18M29 531.5h16M8 532.5h12M18 542.5h34M10 543.5h7M16 558.5h5M10 599.5h9M21 599.5h24M12 600.5h18M16 602.5h7M12 603.5h7M22 603.5h24M8 609.5h14M12 611.5h4M10 613.5h18M8 616.5h4M13 616.5h12M10 623.5h4M8 624.5h4M10 636.5h12M8 637.5h18M8 638.5h12M12 644.5h4M8 646.5h4M15 646.5h8M8 649.5h12M22 649.5h24M14 653.5h7M12 655.5h18M31 655.5h8M12 657.5h9M18 659.5h46M12 660.5h18M16 662.5h9M32 670.5h24M30 671.5h34M12 673.5h12M12 675.5h7M29 676.5h46M12 682.5h14M12 683.5h5M12 688.5h12M8 689.5h7M12 690.5h5M29 691.5h24M12 692.5h5M20 692.5h24M14 693.5h9M12 694.5h18M31 694.5h8M16 714.5h4M8 715.5h4M12 717.5h12M8 718.5h14M12 719.5h7M12 727.5h14M28 727.5h24M12 728.5h7M21 728.5h34M8 729.5h14M32 731.5h12M12 738.5h18M15 742.5h46M14 743.5h7M24 743.5h16M10 746.5h5M16 748.5h9M10 749.5h4M8 752.5h12M22 752.5h8M12 770.5h18M8 771.5h12M12 772.5h7M21 772.5h12M14 775.5h14M22 777.5h46M10 781.5h9M21 781.5h12M12 782.5h4M19 782.5h12M27 793.5h5M8 794.5h18M29 795.5h12M10 796.5h5M16 797.5h18M8 799.5h5M25 800.5h8M14 809.5h7M8 811.5h7M8 816.5h12M14 818.5h14M12 837.5h14M19 842.5h46M16 843.5h12M30 843.5h5M18 845.5h24M18 846.5h34M8 847.5h5M14 848.5h9M10 849.5h12M14 850.5h5M8 852.5h18M28 852.5h8M12 856.5h4M8 865.5h18M12 881.5h18M10 882.5h18M14 883.5h4M33 884.5h34M12 891.5h9M12 892.5h4M12 896.5h5M14 900.5h7M22 900.5h16M14 912.5h9M12 916.5h12M8 919.5h4M23 924.5h34M8 928.5h14M8 929.5h12M10 930.5h12M12 931.5h4M16 953.5h7M15 972.5h34M8 973.5h7M17 973.5h8M16 974.5h24M14 977.5h4M20 977.5h12M30 979.5h34M12 982.5h9M27 985.5h34M12 992.5h4M14 996.5h4M16 999.5h14M10 1004.5h9M10 1007.5h9M22 1007.5h24M10 1008.5h9M16 1009.5h12M16 1011.5h9M12 1012.5h7M22 1012.5h24M10 1013.5h5M18 1013.5h34M8 1025.5h14M16 1026.5h9M12 1033.5h9M20 1034.5h34M26 1035.5h46M8 1036.5h9M16 1042.5h14M33 1042.5h5M12 1043.5h7M22 1043.5h46M22 1045.5h46M16 1047.5h12M29 1047.5h8M12 1048.5h14M16 1049.5h7M12 1055.5h14M27 1061.5h16M8 1062.5h9M14 1064.5h9M26 1064.5h8M12 1067.5h18M10 1068.5h7M31 1069.5h12M10 1072.5h14M8 1075.5h5M8 1076.5h5M12 1079.5h12M8 1080.5h7M16 1083.5h18M37 1083.5h16M28 1086.5h5M12 1094.5h5M10 1095.5h5M16 1100.5h5M22 1100.5h16M25 1101.5h8M8 1111.5h18M8 1112.5h18M27 1123.5h8M16 1127.5h9M28 1128.5h5M8 1129.5h18M28 1129.5h16M12 1131.5h12M16 1135.5h5M22 1135.5h12M14 1143.5h9M10 1145.5h7M28 1152.5h16M16 1157.5h12M12 1161.5h14M25 1168.5h16M12 1169.5h9M23 1169.5h12M10 1171.5h4M12 1173.5h18M32 1173.5h5M27 1175.5h12M14 1179.5h4M33 1180.5h12M8 1181.5h12M16 1185.5h9M12 1186.5h9M14 1188.5h7M22 1188.5h16M12 1191.5h9M8 1206.5h18M12 1207.5h7M12 1208.5h4M8 1215.5h9M14 1216.5h12M16 1217.5h7M30 1220.5h8M8 1226.5h18M8 1228.5h7M16 1228.5h34M32 1230.5h8M12 1232.5h18M16 1233.5h7M13 1237.5h16M8 1240.5h18M14 1241.5h14M12 1245.5h4M16 1246.5h14M14 1256.5h18M12 1259.5h14M12 1262.5h12M10 1264.5h18M16 1265.5h5M12 1266.5h9M8 1267.5h18M23 1269.5h8M16 1270.5h7M24 1270.5h16M16 1274.5h7M25 1274.5h24M15 1276.5h12M12 1277.5h5M20 1277.5h24M12 1281.5h14M12 1283.5h14M8 1299.5h4M15 1299.5h34M16 1300.5h9M31 1301.5h46M10 1302.5h12M14 1303.5h7M10 1305.5h14M24 1307.5h34M16 1308.5h14M33 1308.5h34M16 1309.5h5M10 1312.5h5M8 1314.5h4M12 1315.5h4M12 1316.5h9M23 1316.5h12M10 1317.5h12M18 1322.5h5M8 1325.5h18M8 1327.5h12M14 1331.5h7M22 1333.5h46M8 1335.5h18M8 1336.5h9M19 1336.5h16M16 1341.5h9M12 1344.5h5M28 1347.5h24M8 1349.5h7M20 1350.5h16M8 1359.5h12M12 1374.5h9M14 1378.5h5M24 1380.5h34M8 1396.5h14M15 1399.5h12M16 1400.5h5M22 1400.5h8M8 1401.5h4M8 1402.5h9" stroke="#9a9a9a" stroke-width="1" opacity="0.3" stroke-dasharray="3 1 4 2 2 1"/><path d="M14 39.5h9M25 53.5h12M20 67.5h24M8 71.5h18M12 79.5h18M27 109.5h12M31 111.5h16M14 128.5h5M8 156.5h9M16 162.5h4M16 166.5h12M16 182.5h9M12 192.5h7M10 197.5h12M8 198.5h7M12 224.5h5M10 239.5h7M17 254.5h16M8 260.5h7M14 262.5h9M24 272.5h24M25 309.5h5M14 323.5h7M8 342.5h4M8 355.5h5M14 358.5h18M16 360.5h34M31 364.5h16M10 388.5h18M25 404.5h34M14 406.5h5M14 428.5h14M16 430.5h9M21 441.5h24M28 462.5h34M14 480.5h12M19 493.5h34M27 495.5h8M12 530.5h4M14 540.5h4M12 557.5h14M8 607.5h9M8 639.5h9M27 673.5h46M8 676.5h18M8 677.5h9M12 679.5h12M16 691.5h12M16 695.5h14M10 716.5h4M8 734.5h7M28 794.5h8M18 811.5h16M21 820.5h24M12 842.5h5M8 845.5h9M16 861.5h9M12 880.5h12M16 889.5h5M22 889.5h5M10 895.5h4M19 896.5h12M14 898.5h18M8 899.5h7M31 901.5h5M12 950.5h5M25 953.5h46M12 971.5h7M16 979.5h12M16 984.5h5M12 985.5h12M8 1000.5h4M8 1003.5h14M20 1024.5h8M35 1028.5h16M8 1052.5h9M8 1058.5h4M8 1061.5h18M16 1069.5h14M8 1097.5h4M10 1101.5h12M23 1117.5h46M14 1128.5h12M16 1136.5h12M12 1137.5h7M16 1138.5h18M14 1140.5h4M16 1168.5h7M14 1184.5h5M12 1198.5h5M16 1211.5h7M12 1212.5h9M16 1224.5h16M31 1235.5h8M18 1242.5h46M8 1269.5h12M12 1275.5h7M22 1303.5h46M16 1307.5h5M8 1321.5h4M12 1333.5h9M10 1343.5h5M17 1349.5h8M12 1350.5h7M10 1357.5h18M21 1375.5h5" stroke="#8b80b8" stroke-width="1" opacity="0.36" stroke-dasharray="5 1 3 1"/><path d="M9 1.5h93M9 2.5h90M9 3.5h94M9 4.5h98M9 5.5h88" stroke="#5f8a48" stroke-width="1" opacity="0.7" stroke-dasharray="6 1 3 1 8 1 4 1"/><path d="M84.5 7v2M84.5 15v4M84.5 87v9M84.5 114v5M84.5 120v6M84.5 169v7M84.5 209v5M84.5 230v3M84.5 277v7M84.5 285v8M84.5 313v9M84.5 331v6M84.5 338v2M84.5 367v3M84.5 370v5M84.5 376v7M84.5 383v5M84.5 412v6M84.5 419v8M84.5 545v8M84.5 554v3M84.5 561v8M84.5 570v8M84.5 579v9M84.5 591v6M84.5 618v5M84.5 626v8M84.5 698v3M84.5 701v9M84.5 711v3M84.5 721v5M84.5 759v8M84.5 784v9M84.5 822v9M84.5 831v5M84.5 871v8M84.5 905v6M84.5 934v6M84.5 940v9M84.5 957v4M84.5 963v7M84.5 1015v8M84.5 1090v3M84.5 1103v7M84.5 1164v4M84.5 1200v3M84.5 1249v7M84.5 1285v7M84.5 1293v4M84.5 1353v4M84.5 1361v7M84.5 1369v4M84.5 1385v8" stroke="#777777" stroke-width="1" opacity="0.28" stroke-dasharray="none"/></svg>
    <div id="mmslider"><div class="abs" style="left:119.5px;top:0;width:26.5px;height:12px;background:#3d4a38"></div><div class="abs" style="left:119.5px;top:4px;width:26.5px;height:4px;background:#9ea79b"></div></div>
    <div id="ovr"></div>
  </div>
  <svg class="abs" style="left:0;top:707px" width="40" height="36" viewBox="0 892 40 36" fill="none">
  <path d="M11.4 899H20.6L30 909.6L20.6 920.2H11.4Q9.2 920.2 9.2 918V901.2Q9.2 899 11.4 899Z" stroke="#a6d779" stroke-width="2.6" stroke-linejoin="round"/>
</svg>

</div>
<div class="abs" style="left:716px;top:140px;width:384px;height:52px;border-radius:10px;background:#2e2e2e;box-shadow:0 0 8px 1px rgba(0,0,0,.45)">
<svg class="abs" style="left:0;top:0" width="384" height="52" viewBox="716 140 384 52" fill="none">
  <!-- gripper -->
  <g fill="#8a8a8a">
    <rect x="739.4" y="156" width="4.2" height="4.2"/><rect x="747.6" y="156" width="4.2" height="4.2"/>
    <rect x="739.4" y="164" width="4.2" height="4.2"/><rect x="747.6" y="164" width="4.2" height="4.2"/>
    <rect x="739.4" y="172" width="4.2" height="4.2"/><rect x="747.6" y="172" width="4.2" height="4.2"/>
  </g>
  <!-- continue -->
  <g stroke="#86b7f7" stroke-width="3" stroke-linejoin="miter">
    <path d="M773.6 153.8V178" stroke-width="3.4"/>
    <path d="M782.2 156.2L794.4 166L782.2 175.8Z"/>
  </g>
  <!-- step over -->
  <g stroke="#86b7f7" stroke-width="3">
    <path d="M824.4 166.5A11.3 11.3 0 0 1 845.6 161.5"/>
    <path d="M846.6 153.2V162.8H837"/>
  </g>
  <circle cx="835.6" cy="174" r="4.2" fill="#86b7f7"/>
  <!-- step into -->
  <g stroke="#86b7f7" stroke-width="3">
    <path d="M887.2 152V169.6M879.4 161.8L887.2 169.6L895 161.8"/>
  </g>
  <circle cx="887.2" cy="176" r="4.2" fill="#86b7f7"/>
  <!-- step out -->
  <g stroke="#86b7f7" stroke-width="3">
    <path d="M939.2 170V153M931.4 161.2L939.2 153.4L947 161.2"/>
  </g>
  <circle cx="939.2" cy="176" r="4.2" fill="#86b7f7"/>
  <!-- restart -->
  <g stroke="#86c878" stroke-width="3">
    <path d="M982.6 160.4A10.6 10.6 0 1 1 982 172.4"/>
    <path d="M981.4 153.6V162.6H990.6"/>
  </g>
  <!-- stop -->
  <rect x="1033" y="155.4" width="21.4" height="21.4" rx="2" stroke="#e78a72" stroke-width="3"/>
  <!-- chevron -->
  <path d="M1068.4 163.8L1075.4 170.4L1082.4 163.8" stroke="#c4c4c4" stroke-width="2"/>
</svg>
</div>

<!-- ===== PANEL ===== -->
<div id="panel">
  <span class="ptab" id="pt1" style="letter-spacing:-0.48px;left:40px">PROBLEMS</span>
  <div class="abs" style="left:180px;top:16px;width:36px;height:36px;border-radius:18px;background:#474747;color:#f0f0f0;font-size:22px;line-height:36px;text-align:center">2</div>
  <span class="ptab" id="pt2" style="letter-spacing:0.11px;left:260px">OUTPUT</span>
  <span class="ptab" id="pt3" style="letter-spacing:-0.24px;left:400px">DEBUG CONSOLE</span>
  <span class="ptab" id="pt4" style="letter-spacing:-0.05px;left:638px;color:#e7e7e7">WATCH</span>
  <div class="abs" style="left:633px;top:56px;width:88px;height:2px;background:#e7e7e7"></div>
  <span class="ptab" id="pt5" style="letter-spacing:-0.23px;left:765px">TERMINAL</span>
  <div id="watch"><span style="color:#b383b6">frame</span><span style="color:#b383b6"> = </span><span class="n">5466</span></div>
  <svg class="abs" style="left:1470px;top:-2px" width="288" height="80" viewBox="1470 1600 288 80" fill="none" stroke="#cfcfcf" stroke-width="2">
  <path d="M1503 1623V1649M1490 1636H1516"/>
  <!-- close all -->
  <path d="M1551.8 1631.6V1628.8Q1551.8 1626.3 1554.3 1626.3H1564.4Q1566.9 1626.3 1566.9 1628.8V1638.8Q1566.9 1641.3 1564.4 1641.3H1561.2"/>
  <rect x="1545.3" y="1632.6" width="15" height="15" rx="2.5"/>
  <path d="M1549.6 1636.9L1556 1643.3M1556 1636.9L1549.6 1643.3" stroke-width="2"/>
  <!-- collapse all -->
  <path d="M1603.6 1631.6V1628.8Q1603.6 1626.3 1606.1 1626.3H1616.2Q1618.7 1626.3 1618.7 1628.8V1638.8Q1618.7 1641.3 1616.2 1641.3H1613.4"/>
  <rect x="1597" y="1632.6" width="15.4" height="15" rx="2.5"/>
  <path d="M1600.2 1640.1H1609.2"/>
  <!-- chevron up -->
  <path d="M1651 1640L1660 1631.4L1669 1640"/>
  <!-- close -->
  <path d="M1704.2 1628.3L1719.8 1643.9M1719.8 1628.3L1704.2 1643.9"/>
</svg>

</div>
<!-- ===== SIDEBAR ===== -->
<div id="side">
  <div class="abs" style="left:41px;top:19px;font-size:22px;line-height:34px;color:#bdbdbd;letter-spacing:0;white-space:nowrap" id="rad">RUN AND DEBUG</div>
  <div class="abs" style="left:234px;top:12px;width:344px;height:46px;border-radius:9px;background:#333334"></div>
  <div class="abs" style="left:291px;top:19.5px;font-size:22px;line-height:34px;color:#e0e0e0;white-space:nowrap;letter-spacing:.2px" id="cfg">IVAS FX Encode</div>
  <div class="sh" id="shv" style="top:70px"><span>VARIABLES</span></div>
  <div class="scope" id="scl" style="top:114px">Local</div>
  <div class="var" style="top:158px"><span style="color:#b383b6">L_var1 = </span><span class="n">34011</span></div>
  <div class="var" style="top:202px"><span style="color:#b383b6">var_out = </span><span class="n">1244</span></div>
  <div class="scope" style="top:246px">Static</div>
  <div class="scope" style="top:290px">Global</div>
  <div class="scope" style="top:334px">Registers</div>

  <div class="sh bt" style="top:1028px"><span>CALL STACK</span></div>
  <div class="abs" style="left:457px;top:1039px;width:181px;height:25px;border-radius:5px;background:#6a2623;color:#e6dcd9;font-weight:bold;font-size:19px;line-height:26px;text-align:center;white-space:nowrap;letter-spacing:.32px" id="hit">hit program assert</div>
  <div class="row" style="top:1072px"><span class="nm">__pthread_kill</span><span class="fl" id="fl_pth" style="right:78.5px;letter-spacing:.4px">@__pthread_kill</span><span class="bd" style="padding:0;width:36px;text-align:center">5</span></div>
  <div class="abs" style="left:60px;top:1116px;width:646px;height:32px;line-height:34px;text-align:center;font-size:26px;color:#3d66b0;white-space:nowrap;letter-spacing:.36px" id="showmore">Show 3 More Stack Frames</div>
  <div class="row" style="top:1148px;background:#1c3152;border:2px solid #3d7ee0"><span class="nm" style="left:58px;top:0;color:#fff">saturate</span><span class="fl" id="fl_sat" style="right:131px;top:-1px;color:#fff">basop32.c</span><span class="bd" style="right:31.5px;top:5px;color:#fff;background:#4a4a49">505:9</span></div>
  <div class="row" style="top:1192px"><span class="nm">add</span><span class="fl" style="right:130px">basop32.c</span><span class="bd">582:15</span></div>
  <div class="row" style="top:1236px"><span class="nm">filt_mu_fx</span><span class="fl" style="right:131px">swb_tbe_com_fx.c</span><span class="bd">985:16</span></div>
  <div class="row" style="top:1280px"><span class="nm">PostShortTerm_ivas_enc_fx</span><span class="fl" style="right:42px">swb_tbe_com_fx.c</span></div>
  <div class="row" style="top:1324px"><span class="nm">swb_tbe_enc_ivas_fx</span><span class="fl" style="right:143px">swb_tbe_enc_fx.c</span><span class="bd">3754:13</span></div>
  <div class="row" style="top:1368px"><span class="nm">ivas_core_enc_fx</span><span class="fl" style="right:127px">ivas_core_enc.c</span><span class="bd">752:17</span></div>
  <div class="row" style="top:1412px"><span class="nm">ivas_cpe_enc_fx</span><span class="fl" style="right:127px">ivas_cpe_enc.c</span><span class="bd">1199:5</span></div>
  <div class="row" style="top:1456px"><span class="nm">ivas_enc_fx</span><span class="fl" style="right:117px">ivas_enc.c</span><span class="bd">185:9</span></div>
  <div class="row" style="top:1500px"><span class="nm">IVAS_ENC_EncodeFrameToSerial</span><span class="fl" style="right:129px">lib_enc.c</span><span class="bd">1762:9</span></div>

  <div class="sh bt" style="top:1552px"><span>BREAKPOINTS</span></div>
  <div class="sh bt" style="top:1596px"><span>MODULES</span></div>
  <div class="sh bt" style="top:1640px"><span>EXCLUDED CALLERS</span></div>
  <svg class="abs" style="left:0;top:0" width="706" height="1684" viewBox="1758 70 706 1684" fill="none" stroke="#cccccc" stroke-width="2">
  <!-- start debugging -->
  <path d="M2008.6 95.4L2023 105.6L2008.6 115.8Z" stroke="#80c873" stroke-width="2.8" stroke-linejoin="miter"/>
  <path d="M2296.3 101.0L2305.8 111.0L2315.3 101.0"/>
  <path d="M2363.7 95.4L2363.8 91.2L2368.0 91.2L2368.1 95.4L2371.1 96.7L2374.2 93.8L2377.1 96.7L2374.2 99.8L2375.5 102.8L2379.7 102.9L2379.7 107.1L2375.5 107.2L2374.2 110.2L2377.1 113.3L2374.2 116.2L2371.1 113.3L2368.1 114.6L2368.0 118.8L2363.8 118.8L2363.7 114.6L2360.7 113.3L2357.6 116.2L2354.7 113.3L2357.6 110.2L2356.3 107.2L2352.1 107.1L2352.1 102.9L2356.3 102.8L2357.6 99.8L2354.7 96.7L2357.6 93.8L2360.7 96.7Z" stroke-linejoin="round"/>
  <circle cx="2365.9" cy="105" r="3.6"/>
  <g fill="#cccccc" stroke="none"><circle cx="2408" cy="105" r="2.2"/><circle cx="2418" cy="105" r="2.2"/><circle cx="2428" cy="105" r="2.2"/></g>
  <!-- twisties -->
  <path d="M1768.9 158.1L1777.9 167.6L1786.9 158.1"/>
  <path d="M1786.9 202.1L1795.9 211.6L1804.9 202.1"/>
  <path d="M1792.5 329.0L1802.0 338.0L1792.5 347.0"/>
  <path d="M1792.5 373.0L1802.0 382.0L1792.5 391.0"/>
  <path d="M1792.5 417.0L1802.0 426.0L1792.5 435.0"/>
  <path d="M1768.9 1116.8L1777.9 1126.3L1786.9 1116.8"/>
  <path d="M1773.8 1636.0L1783.3 1645.0L1773.8 1654.0"/>
  <path d="M1773.8 1680.0L1783.3 1689.0L1773.8 1698.0"/>
  <path d="M1773.8 1724.0L1783.3 1733.0L1773.8 1742.0"/>
  <!-- collapse all (call stack) -->
  <path d="M2431.6 1115.6V1112.8Q2431.6 1110.3 2434.1 1110.3H2444.5Q2447 1110.3 2447 1112.8V1122.8Q2447 1125.3 2444.5 1125.3H2441.2"/>
  <rect x="2425" y="1116.6" width="15.4" height="15.4" rx="2.5"/>
  <path d="M2428.4 1124.3H2437"/>
</svg>

</div>
<!-- ===== ACTIVITY BAR ===== -->
<div id="act">
  <svg class="abs" style="left:0;top:0" width="96" height="1684" viewBox="2464 70 96 1684" fill="none" stroke="#868686" stroke-width="3.1" stroke-linejoin="round">
  <!-- explorer -->
  <path d="M2504.3 98.6Q2504.3 95.9 2507 95.9H2522.4L2530.5 104V125.4Q2530.5 128.1 2527.8 128.1H2507Q2504.3 128.1 2504.3 125.4Z"/>
  <path d="M2522 96.2V104.4H2530.2" stroke-width="2.8"/>
  <path d="M2504 108.1H2494.7Q2492 108.1 2492 110.8V137.3Q2492 140 2494.7 140H2515.1Q2517.8 140 2517.8 137.3V128.4"/>
  <!-- search -->
  <circle cx="2518.5" cy="206.6" r="15"/>
  <path d="M2507.6 218.2L2491.2 236.6"/>
  <!-- source control -->
  <circle cx="2501.4" cy="293.3" r="6"/><circle cx="2501.4" cy="326.7" r="6"/><circle cx="2522.4" cy="302.3" r="6"/>
  <path d="M2501.4 299.3V320.7M2522.4 308.3Q2521.4 315.6 2513.4 315.6H2508.6Q2501.4 315.6 2501.4 320.7"/>
  <!-- gitlens inspect -->
  <path d="M2517.6 386.9A15 15 0 1 0 2508.2 415.2"/>
  <path d="M2503.6 413.8L2491.4 424.4"/>
  <circle cx="2522.5" cy="411.8" r="9"/>
  <path d="M2522.5 382V402.8M2522.5 420.8V430"/>
  <path d="M2528.2 392.6Q2530.4 395.6 2530.6 399" stroke-width="2.4"/>
  <!-- gitlens lines -->
  <path d="M2490 481.4H2534.1M2490 489.4H2512M2512 497.5H2534.1M2490 505.5H2534.1M2490 513.4H2512M2490 521.5H2534.1" stroke-width="3" stroke-linecap="butt"/>
  <!-- live share -->
  <path d="M2490.2 606.2Q2492.6 585.6 2517.4 583.4V575.4L2535 589.3L2517.4 602.4V594.4Q2499.4 594.2 2490.2 606.2Z" stroke-linejoin="miter"/>
  <circle cx="2508" cy="612.7" r="7.5"/>
  <!-- remote explorer -->
  <path d="M2531.2 787V774.9Q2531.2 772.2 2528.5 772.2H2493.4Q2490.7 772.2 2490.7 774.9V799.8Q2490.7 802.5 2493.4 802.5H2509"/>
  <path d="M2498.5 809.6H2509" stroke-width="2.8"/>
  <circle cx="2523.3" cy="801.5" r="11.2" stroke-width="2.8"/>
  <path d="M2518 797.6L2521.6 801.4L2518 805.2M2528.8 795.6L2525.2 799.2L2528.8 802.8" stroke-width="1.9"/>
  <!-- extensions -->
  <path d="M2507.7 890.4V876.2Q2507.7 873.5 2505 873.5H2492.5Q2489.8 873.5 2489.8 876.2V905.5Q2489.8 908.2 2492.5 908.2H2522.8Q2525.5 908.2 2525.5 905.5V893.1Q2525.5 890.4 2522.8 890.4H2489.8M2507.7 890.4V908.2"/>
  <rect x="2517.1" y="863.9" width="17.6" height="17" rx="3"/>
  <!-- testing flask -->
  <path d="M2503.2 962.7H2521.2M2507.9 963V977L2495.4 999.6Q2494.6 1001.6 2497 1001.6H2527Q2529.4 1001.6 2528.6 999.6L2516.3 977V963M2501.6 989.3H2522.6"/>
  <!-- gitlab -->
  <path d="M2496.7 1057L2502.4 1071.4H2521.6L2527.3 1057L2534.6 1074.6Q2535.6 1077.6 2533.4 1079.8L2512 1099.4L2490.6 1079.8Q2488.4 1077.6 2489.4 1074.6Z"/>
  <!-- tree check -->
  <path d="M2505.8 1184.6A5 5 0 0 1 2498 1183A8.4 8.4 0 0 1 2492 1172.4A7.4 7.4 0 0 1 2495 1161.8A7 7 0 0 1 2502.4 1155.6A9.6 9.6 0 0 1 2521.2 1155.6A7 7 0 0 1 2528.6 1161.8A7.4 7.4 0 0 1 2531.8 1172.4A8.4 8.4 0 0 1 2525.6 1183A5 5 0 0 1 2517.8 1184.6" stroke-width="2.8"/>
  <path d="M2508.6 1184.8V1190.4L2505.6 1196.4H2518.2L2515.2 1190.4V1184.8" stroke-width="2.8"/>
  <path d="M2502 1169L2508.6 1175.8L2521 1164.2" stroke-width="2.6"/>
  <!-- account -->
  <circle cx="2512" cy="1610" r="22.4"/>
  <circle cx="2512" cy="1605.4" r="9.6"/>
  <path d="M2497.6 1626.4Q2501 1615 2512 1615Q2523 1615 2526.4 1626.4"/>
  <!-- manage gear -->
  <path d="M2507.8 1689.5L2507.9 1682.7L2515.5 1682.7L2515.6 1689.5L2520.4 1691.5L2525.2 1686.7L2530.6 1692.1L2525.8 1696.9L2527.8 1701.7L2534.6 1701.8L2534.6 1709.4L2527.8 1709.5L2525.8 1714.3L2530.6 1719.1L2525.2 1724.5L2520.4 1719.7L2515.6 1721.7L2515.5 1728.5L2507.9 1728.5L2507.8 1721.7L2503.0 1719.7L2498.2 1724.5L2492.8 1719.1L2497.6 1714.3L2495.6 1709.5L2488.8 1709.4L2488.8 1701.8L2495.6 1701.7L2497.6 1696.9L2492.8 1692.1L2498.2 1686.7L2503.0 1691.5Z" stroke="#7e7e7e"/>
  <circle cx="2511.7" cy="1705.6" r="5.4" stroke="#7e7e7e"/>
  <!-- debug (active) -->
  <g stroke="#ffffff">
    <path d="M2503.9 693V671.2L2534.6 690.4L2529 693.8" stroke-linejoin="miter" stroke-width="3"/>
    <ellipse cx="2500" cy="706.8" rx="6.6" ry="9.6" stroke-width="2.6" fill="#2c2c2c"/>
    <path d="M2493.2 702.6H2506.8M2488.4 699L2493.6 702M2511.6 699L2506.4 702M2487.8 707.6H2493.2M2512.2 707.6H2506.8M2488.6 716.8L2494 712.6M2511.4 716.8L2506 712.6" stroke-width="2.4"/>
  </g>
</svg>
<div class="abs" style="left:92px;top:576px;width:4px;height:96px;background:#fff"></div>
<div class="abs" style="left:48px;top:624px;width:32px;height:32px;border-radius:16px;background:#3973c8;color:#fff;font-size:20px;line-height:32px;text-align:center">1</div>
<div class="abs" style="left:48px;top:1636px;width:32px;height:32px;border-radius:16px;background:#2f67c0"></div>
<div class="abs" style="left:51px;top:1639px;width:26px;height:26px;border-radius:13px;border:2.4px solid #fff;background:#3973c8"></div>
<svg class="abs" style="left:48px;top:1636px" width="32" height="32" viewBox="0 0 32 32" fill="none" stroke="#fff" stroke-width="2.2"><path d="M15.6 8.6V16.6L21 20.6"/></svg>

</div>
<!-- ===== STATUS BAR ===== -->
<div id="status">
  <div id="remote"></div>
  <span id="st_main" style="left:115px">main</span>
  <span style="left:272px">0</span>
  <span style="left:330px">2</span>
  <span id="st_cfg" style="letter-spacing:0.44px;left:410px">IVAS FX Encode (ivas-basop)</span>
  <span id="st_clangd" style="letter-spacing:0.69px;left:773px">clangd: idle</span>
  <span id="st_build" style="letter-spacing:0.16px;left:970px">Build</span>
  <span id="st_blame" style="letter-spacing:0.6px;left:1522px">Sandesh Venkatesh, 14 months ago</span>
  <span id="st_ln" style="letter-spacing:0.74px;left:1960px">Ln 505, Col 9</span>
  <span id="st_sp" style="letter-spacing:0.47px;left:2145px">Spaces: 4</span>
  <span id="st_utf" style="letter-spacing:0.75px;left:2289px">UTF-8</span>
  <span id="st_lf" style="letter-spacing:-1px;left:2394px">LF</span>
  <span style="left:2453px">C</span>
  <svg class="abs" style="left:0;top:0" width="2560" height="44" viewBox="0 1754 2560 44" fill="none" stroke="#ffffff" stroke-width="2" stroke-linejoin="round">
  <!-- remote -->
  <path d="M26 1772L33.4 1779.2L26 1786.4M41.8 1764.8L34.6 1772L41.8 1779.2" stroke-linejoin="miter"/>
  <!-- lock -->
  <rect x="84.6" y="1775.3" width="18.7" height="11.9" rx="1.8"/>
  <path d="M88 1775.3V1770.9A6 6 0 0 1 100 1770.9V1775.3"/>
  <!-- sync -->
  <path d="M186.8 1773.6A8.8 8.8 0 0 1 203.2 1772.4M203.8 1778.6A8.8 8.8 0 0 1 187.2 1779.8"/>
  <path d="M183 1776.8L187 1773L190.8 1776.8M207 1774.6L203.2 1778.4L199.2 1774.6" stroke-linejoin="miter"/>
  <!-- error -->
  <circle cx="250.2" cy="1776" r="10.8"/>
  <path d="M245.6 1771.4L254.8 1780.6M254.8 1771.4L245.6 1780.6"/>
  <!-- warning -->
  <path d="M307.4 1765.4L318.4 1785.2H296.4Z"/>
  <path d="M307.4 1772.6V1779" stroke-width="2.2"/><circle cx="307.4" cy="1782" r="1.2" fill="#fff" stroke="none"/>
  <!-- debug-alt small -->
  <path d="M384.4 1775V1767L399.8 1777L391 1782.8" stroke-linejoin="miter"/>
  <ellipse cx="381.4" cy="1783.8" rx="3.8" ry="5" stroke-width="1.8"/>
  <path d="M375.6 1780.4L378 1781.6M387.2 1780.4L384.8 1781.6M375.2 1784.4H377.6M387.6 1784.4H385.2M375.8 1788.6L378.2 1786.8M387 1788.6L384.6 1786.8" stroke-width="1.6"/>
  <!-- gear -->
  <path d="M946.9 1768.0L946.9 1764.8L950.7 1764.8L950.7 1768.0L953.1 1769.0L955.4 1766.7L958.1 1769.4L955.8 1771.7L956.8 1774.1L960.0 1774.1L960.0 1777.9L956.8 1777.9L955.8 1780.3L958.1 1782.6L955.4 1785.3L953.1 1783.0L950.7 1784.0L950.7 1787.2L946.9 1787.2L946.9 1784.0L944.5 1783.0L942.2 1785.3L939.5 1782.6L941.8 1780.3L940.8 1777.9L937.6 1777.9L937.6 1774.1L940.8 1774.1L941.8 1771.7L939.5 1769.4L942.2 1766.7L944.5 1769.0Z"/>
  <circle cx="948.8" cy="1776" r="2.9"/>
  <!-- bug -->
  <ellipse cx="1072.4" cy="1776.6" rx="7.4" ry="9.4"/>
  <path d="M1067.2 1766.6A5.2 5.2 0 0 1 1077.6 1766.6" />
  <path d="M1060.4 1776.8H1065M1084.4 1776.8H1079.8M1062 1767.6L1066 1770.8M1082.8 1767.6L1078.8 1770.8M1062 1786.4L1066.2 1782.8M1082.8 1786.4L1078.6 1782.8" stroke-width="1.8"/>
  <!-- play -->
  <path d="M1124.4 1767L1139.6 1777L1124.4 1787Z" stroke-linejoin="miter"/>
  <!-- git commit -->
  <circle cx="1501" cy="1776" r="6"/>
  <path d="M1501 1762.4V1770M1501 1782V1789.4"/>
  <!-- bell -->
  <path d="M2506 1786.4H2526.4L2524 1781.6V1774.6A7.8 7.8 0 0 0 2508.4 1774.6V1781.6Z"/>
  <path d="M2513.6 1787.4A2.6 2.6 0 0 0 2518.8 1787.4" stroke-width="1.8"/>
</svg>

</div>
</div>

</body></html>
